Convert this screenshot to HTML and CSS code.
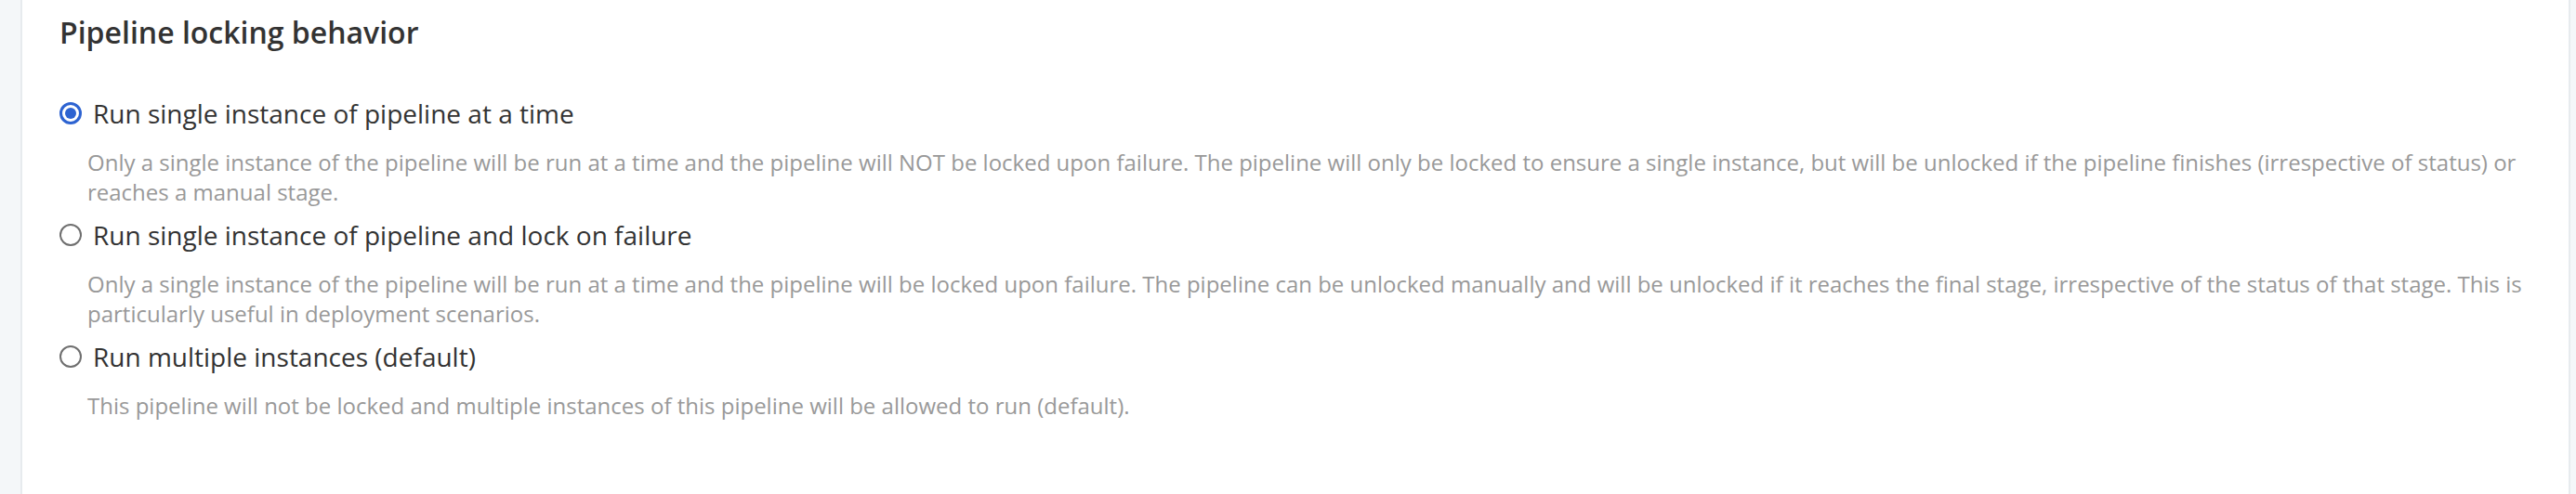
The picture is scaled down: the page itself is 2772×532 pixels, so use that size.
FILE: index.html
```html
<!DOCTYPE html>
<html>
<head>
<meta charset="utf-8">
<link rel="stylesheet" href="styles.css">
</head>
<body>
<div class="page">
  <div class="panel">
    <h2 class="title">Pipeline locking behavior</h2>
    <div class="options">
      <div class="option">
        <label class="option-label"><span class="radio checked"></span><span class="label-text">Run single instance of pipeline at a time</span></label>
        <p class="help">Only a single instance of the pipeline will be run at a time and the pipeline will NOT be locked upon failure. The pipeline will only be locked to ensure a single instance, but will be unlocked if the pipeline finishes (irrespective of status) or reaches a manual stage.</p>
      </div>
      <div class="option">
        <label class="option-label"><span class="radio"></span><span class="label-text">Run single instance of pipeline and lock on failure</span></label>
        <p class="help">Only a single instance of the pipeline will be run at a time and the pipeline will be locked upon failure. The pipeline can be unlocked manually and will be unlocked if it reaches the final stage, irrespective of the status of that stage. This is particularly useful in deployment scenarios.</p>
      </div>
      <div class="option">
        <label class="option-label"><span class="radio"></span><span class="label-text">Run multiple instances (default)</span></label>
        <p class="help">This pipeline will not be locked and multiple instances of this pipeline will be allowed to run (default).</p>
      </div>
    </div>
  </div>
</div>
</body>
</html>
```
FILE: styles.css
```css
html, body {
  margin: 0;
  padding: 0;
  background: #f4f7f9;
  font-family: "Open Sans", "Noto Sans", sans-serif;
}
.page {
  display: flex;
  height: 532px;
  padding: 0 6px 0 22px;
}
.panel {
  flex: 1;
  background: #fff;
  border-left: 2px solid #e7ebee;
  border-right: 2px solid #e7ebee;
  padding: 15px 40px 0 40px;
}
.title {
  margin: 0;
  font-size: 32px;
  line-height: 40px;
  font-weight: 600;
  color: #333;
}
.options {
  margin-top: 49px;
  display: flex;
  flex-direction: column;
  gap: 12px;
}
.option-label {
  display: flex;
  align-items: center;
  gap: 12px;
  font-size: 28px;
  line-height: 36px;
  color: #333;
}
.radio {
  box-sizing: border-box;
  width: 24px;
  height: 24px;
  border-radius: 50%;
  border: 2px solid #6f6f6f;
  display: flex;
  align-items: center;
  justify-content: center;
  flex: none;
}
.radio.checked {
  border: 3px solid #2d63d1;
}
.radio.checked::after {
  content: "";
  width: 12px;
  height: 12px;
  border-radius: 50%;
  background: #2d63d1;
}
.help {
  margin: 19px 0 0 30px;
  font-size: 24px;
  line-height: 32px;
  color: #999;
}
```
